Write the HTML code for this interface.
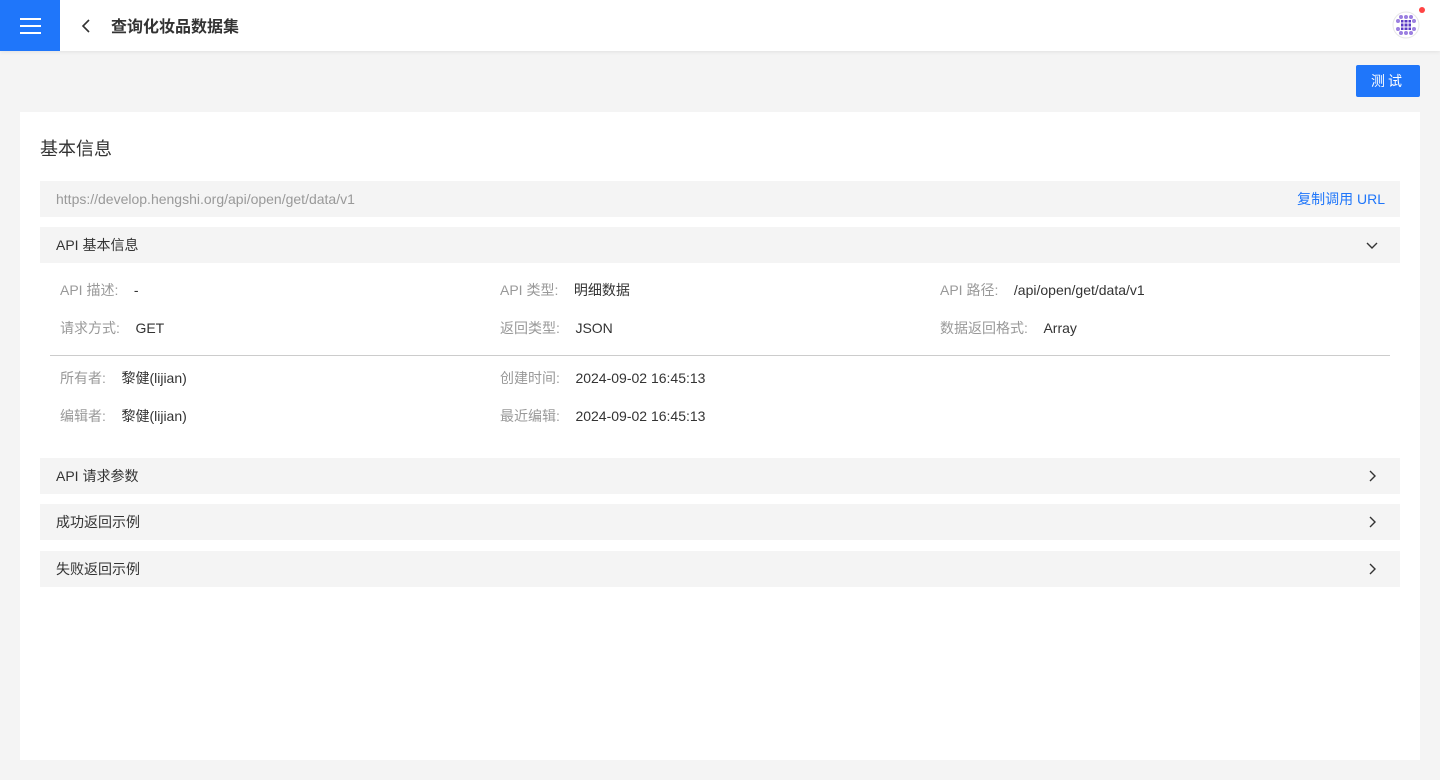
<!DOCTYPE html>
<html><head><meta charset="utf-8"><style>
*{margin:0;padding:0;box-sizing:border-box}
body{width:1440px;height:780px;background:#f4f4f4;font-family:"Liberation Sans","Noto Sans CJK SC",sans-serif;font-size:14px;color:#333;position:relative;overflow:hidden}
.hdr{position:absolute;left:0;top:0;width:1440px;height:51px;background:#fff;box-shadow:0 1px 4px rgba(0,0,0,.08)}
.menu{position:absolute;left:0;top:0;width:60px;height:51px;background:#1f76fa}
.menu i{position:absolute;left:20px;width:21px;height:2px;background:#fff}
.title{position:absolute;left:111px;top:13px;font-size:16px;font-weight:bold;color:#333}
.btn{position:absolute;left:1356px;top:65px;width:64px;height:32px;background:#1f76fa;border-radius:2px;color:#fff;text-align:center;line-height:32px;font-size:14px;letter-spacing:3px}
.card{position:absolute;left:20px;top:112px;width:1400px;height:648px;background:#fff}
.h{position:absolute;left:20px;top:23px;font-size:18px;color:#333}
.bar{position:absolute;left:20px;width:1360px;height:36px;background:#f4f4f4;line-height:36px;padding-left:16px}
.lab{color:#999}
.row{position:absolute;font-size:14px}
.chev{position:absolute;right:22px;top:12px}
</style></head><body>
<div class="hdr">
<div class="menu"><i style="top:18px"></i><i style="top:25px"></i><i style="top:32px"></i></div>
<svg style="position:absolute;left:80px;top:18px" width="12" height="16"><path d="M9 2L3 8l6 6" stroke="#333" stroke-width="1.6" fill="none"/></svg>
<div class="title">查询化妆品数据集</div>
<svg style="position:absolute;left:1392px;top:11px" width="28" height="28"><circle cx="14" cy="14" r="13" fill="#fff" stroke="#e6e6e6"/><g fill="#9b7fe0"><circle cx="9" cy="6" r="2"/><circle cx="14" cy="6" r="2"/><circle cx="19" cy="6" r="2"/><circle cx="6" cy="10" r="2"/><circle cx="22" cy="10" r="2"/><circle cx="6" cy="18" r="2"/><circle cx="22" cy="18" r="2"/><circle cx="9" cy="22" r="2"/><circle cx="14" cy="22" r="2"/><circle cx="19" cy="22" r="2"/></g><rect x="9" y="9" width="10" height="10" fill="#5b3bc4"/><path d="M12 9v10M16 9v10M9 12h10M9 16h10" stroke="#fff" stroke-width="1"/></svg>
<div style="position:absolute;left:1419px;top:7px;width:6px;height:6px;border-radius:50%;background:#f44"></div>
</div>
<div class="btn">测试</div>
<div class="card">
<div class="h">基本信息</div>
<div class="bar" style="top:69px;color:#999">https://develop.hengshi.org/api/open/get/data/v1<span style="position:absolute;right:15px;color:#1f76fa">复制调用 URL</span></div>
<div class="bar" style="top:115px">API 基本信息<svg class="chev" width="12" height="12"><path d="M1 4l5 5 5-5" stroke="#333" stroke-width="1.4" fill="none"/></svg></div>
<div class="row" style="left:40px;top:168px"><span class="lab">API 描述:</span>&nbsp;&nbsp;&nbsp; -</div>
<div class="row" style="left:480px;top:168px"><span class="lab">API 类型:</span>&nbsp;&nbsp;&nbsp; 明细数据</div>
<div class="row" style="left:920px;top:168px"><span class="lab">API 路径:</span>&nbsp;&nbsp;&nbsp; /api/open/get/data/v1</div>
<div class="row" style="left:40px;top:206px"><span class="lab">请求方式:</span>&nbsp;&nbsp;&nbsp; GET</div>
<div class="row" style="left:480px;top:206px"><span class="lab">返回类型:</span>&nbsp;&nbsp;&nbsp; JSON</div>
<div class="row" style="left:920px;top:206px"><span class="lab">数据返回格式:</span>&nbsp;&nbsp;&nbsp; Array</div>
<div style="position:absolute;left:30px;top:243px;width:1340px;height:1px;background:#ccc"></div>
<div class="row" style="left:40px;top:256px"><span class="lab">所有者:</span>&nbsp;&nbsp;&nbsp; 黎健(lijian)</div>
<div class="row" style="left:480px;top:256px"><span class="lab">创建时间:</span>&nbsp;&nbsp;&nbsp; 2024-09-02 16:45:13</div>
<div class="row" style="left:40px;top:294px"><span class="lab">编辑者:</span>&nbsp;&nbsp;&nbsp; 黎健(lijian)</div>
<div class="row" style="left:480px;top:294px"><span class="lab">最近编辑:</span>&nbsp;&nbsp;&nbsp; 2024-09-02 16:45:13</div>
<div class="bar" style="top:346px">API 请求参数<svg class="chev" width="12" height="12"><path d="M4 1l5 5-5 5" stroke="#333" stroke-width="1.4" fill="none"/></svg></div>
<div class="bar" style="top:392px">成功返回示例<svg class="chev" width="12" height="12"><path d="M4 1l5 5-5 5" stroke="#333" stroke-width="1.4" fill="none"/></svg></div>
<div class="bar" style="top:439px">失败返回示例<svg class="chev" width="12" height="12"><path d="M4 1l5 5-5 5" stroke="#333" stroke-width="1.4" fill="none"/></svg></div>
</div>
</body></html>
